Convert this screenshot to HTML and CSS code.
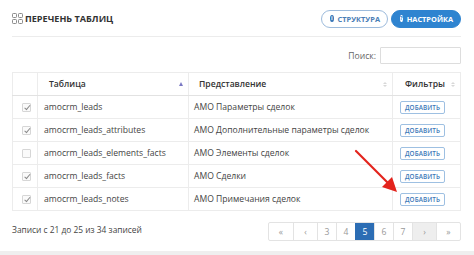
FILE: index.html
```html
<!DOCTYPE html>
<html lang="ru">
<head>
<meta charset="utf-8">
<link rel="stylesheet" href="styles.css">
</head>
<body>
<div class="card">
  <div class="head">
    <div class="title">
      <svg class="ticon" width="11" height="11" viewBox="0 0 11 11"><g fill="none" stroke="#8a8a8a" stroke-width="1"><rect x="0.5" y="0.5" width="4" height="4" rx="0.8"/><rect x="6.5" y="0.5" width="4" height="4" rx="0.8"/><rect x="0.5" y="6.5" width="4" height="4" rx="0.8"/><rect x="6.5" y="6.5" width="4" height="4" rx="0.8"/></g></svg>
      <span>ПЕРЕЧЕНЬ ТАБЛИЦ</span>
    </div>
    <div class="actions">
      <button class="pill pill-outline"><span class="dot dot-blue">i</span>СТРУКТУРА</button>
      <button class="pill pill-solid"><span class="dot dot-white">?</span>НАСТРОЙКА</button>
    </div>
  </div>
  <div class="toolbar">
    <label class="search">Поиск: <span class="input"></span></label>
  </div>
  <table class="grid">
    <colgroup><col class="c1"><col class="c2"><col class="c3"><col class="c4"></colgroup>
    <thead>
      <tr>
        <th></th>
        <th><div class="thc">Таблица<span class="sort-up"></span></div></th>
        <th><div class="thc">Представление<span class="sort-both"><i></i><b></b></span></div></th>
        <th><div class="thc">Фильтры<span class="sort-both"><i></i><b></b></span></div></th>
      </tr>
    </thead>
    <tbody>
      <tr><td><span class="cb on"></span></td><td>amocrm_leads</td><td>АМО Параметры сделок</td><td><span class="add">ДОБАВИТЬ</span></td></tr>
      <tr><td><span class="cb on"></span></td><td>amocrm_leads_attributes</td><td>АМО Дополнительные параметры сделок</td><td><span class="add">ДОБАВИТЬ</span></td></tr>
      <tr><td><span class="cb"></span></td><td>amocrm_leads_elements_facts</td><td>АМО Элементы сделок</td><td><span class="add">ДОБАВИТЬ</span></td></tr>
      <tr><td><span class="cb on"></span></td><td>amocrm_leads_facts</td><td>АМО Сделки</td><td><span class="add">ДОБАВИТЬ</span></td></tr>
      <tr><td><span class="cb on"></span></td><td>amocrm_leads_notes</td><td>АМО Примечания сделок</td><td><span class="add">ДОБАВИТЬ</span></td></tr>
    </tbody>
  </table>
  <div class="foot">
    <div class="info">Записи с 21 до 25 из 34 записей</div>
    <ul class="pager">
      <li class="w">«</li><li class="w">‹</li><li>3</li><li>4</li><li class="active">5</li><li>6</li><li>7</li><li class="w hover">›</li><li class="w">»</li>
    </ul>
  </div>
  <svg class="arrow" width="60" height="60" viewBox="0 0 60 60"><line x1="3" y1="3" x2="36" y2="36" stroke="#e3231c" stroke-width="2.2" stroke-linecap="round"/><polygon points="44,44 29,39 39,29" fill="#e3231c"/></svg>
</div>
</body>
</html>
```
FILE: styles.css
```css
html, body { margin: 0; padding: 0; }
body {
  background: #efefef;
  font-family: "Open Sans", "DejaVu Sans", sans-serif;
  color: #444;
  width: 474px;
  height: 255px;
  overflow: hidden;
}
.card {
  position: relative;
  background: #fff;
  height: 251px;
  padding: 0 13px 0 12px;
  box-sizing: border-box;
}
.head {
  height: 36px;
  border-bottom: 1px solid #ececec;
  display: flex;
  align-items: center;
  justify-content: space-between;
}
.title {
  display: flex;
  align-items: center;
  gap: 2px;
  font-weight: 700;
  font-size: 9.1px;
  color: #333;
  letter-spacing: 0;
}
.ticon { display: block; }
.actions { display: flex; gap: 3px; padding-top: 1px; }
.pill {
  height: 18px;
  border-radius: 9px;
  font-family: "Open Sans", sans-serif;
  font-size: 7.4px;
  font-weight: 700;
  display: flex;
  align-items: center;
  gap: 4px;
  box-sizing: border-box;
  cursor: pointer;
}
.pill-outline {
  background: #fff;
  border: 1.5px solid #9dbbdc;
  color: #4a7db5;
  padding: 0 7px 0 8px;
  width: 67px;
}
.pill-solid {
  background: #2f84d0;
  border: 1px solid #2f84d0;
  color: #fff;
  padding: 0 7px 0 8px;
  width: 70px;
}
.dot {
  width: 7px; height: 7px; border-radius: 50%;
  display: inline-flex; align-items: center; justify-content: center;
  font-size: 5.5px; font-weight: 700; line-height: 1;
}
.dot-blue { background: #3b78b8; color: #fff; }
.dot-white { background: #fff; color: #2f84d0; }

.toolbar {
  display: flex;
  justify-content: flex-end;
  padding: 10px 0 8px;
}
.search {
  display: flex;
  align-items: center;
  gap: 4px;
  font-size: 8.6px;
  color: #666;
}
.input {
  display: block;
  width: 81px;
  height: 17px;
  border: 1px solid #ddd;
  box-sizing: border-box;
  border-radius: 1px;
}

.grid {
  width: 448px;
  border-collapse: collapse;
  table-layout: fixed;
  font-size: 8.6px;
  color: #444;
}
.c1 { width: 25px; } .c2 { width: 151px; } .c3 { width: 204px; } .c4 { width: 68px; }
.grid th, .grid td {
  border: 1px solid #ececec;
  height: 22px;
  padding: 0 0 0 6px;
  text-align: left;
  white-space: nowrap;
  overflow: hidden;
}
.grid th { font-weight: 600; color: #333; border-bottom: 1px solid #e2e2e2; }
.grid th:nth-child(2), .grid td:nth-child(2) { padding-left: 6px; }
.grid th:nth-child(2) { padding-left: 11px; }
.grid th:nth-child(3) { padding-left: 10px; }
.grid th:nth-child(4) { padding-left: 12px; }
.grid td:nth-child(3) { padding-left: 5px; }
.grid td:nth-child(4) { padding-left: 7px; }
.grid td:first-child { padding-left: 9px; }
.thc { display: flex; align-items: center; justify-content: space-between; padding-right: 5px; }
.sort-up {
  width: 0; height: 0;
  border-left: 2.5px solid transparent;
  border-right: 2.5px solid transparent;
  border-bottom: 4px solid #7b79c4;
}
.sort-both { display: flex; flex-direction: column; gap: 1px; }
.sort-both i, .sort-both b {
  display: block; width: 0; height: 0;
  border-left: 2px solid transparent;
  border-right: 2px solid transparent;
}
.sort-both i { border-bottom: 2.5px solid #d8d8d8; }
.sort-both b { border-top: 2.5px solid #d8d8d8; }

.cb {
  display: block;
  width: 9px; height: 9px;
  border: 1px solid #d6d6d6;
  box-sizing: border-box;
  border-radius: 1px;
  position: relative;
  background: #fafafa;
}
.cb.on::after {
  content: "";
  position: absolute;
  left: 2.5px; top: 0.5px;
  width: 2px; height: 4.5px;
  border: solid #888;
  border-width: 0 1.2px 1.2px 0;
  transform: rotate(40deg);
}
.add {
  display: inline-flex;
  align-items: center;
  justify-content: center;
  width: 45px;
  height: 13px;
  box-sizing: border-box;
  border: 1px solid #9ec0e2;
  border-radius: 2px;
  color: #3b78b8;
  font-size: 6.3px;
  font-weight: 600;
  letter-spacing: 0.1px;
}

.foot {
  display: flex;
  justify-content: space-between;
  align-items: flex-start;
  padding-top: 11px;
}
.info { font-size: 8.4px; color: #444; padding-top: 2px; }
.pager {
  list-style: none;
  margin: 0; padding: 0;
  display: flex;
  border: 1px solid #e3e3e3;
  border-radius: 2px;
  height: 19px;
  box-sizing: border-box;
}
.pager li {
  width: 19px;
  display: flex;
  align-items: center;
  justify-content: center;
  font-size: 8.6px;
  color: #999;
  border-left: 1px solid #e3e3e3;
  box-sizing: border-box;
}
.pager li:first-child { border-left: none; }
.pager li.w { width: 24px; }
.pager li.active { background: #2c6db4; color: #fff; border-color: #2c6db4; }
.pager li.hover { background: #eeeeee; }

.arrow {
  position: absolute;
  left: 353px;
  top: 148px;
}
```
